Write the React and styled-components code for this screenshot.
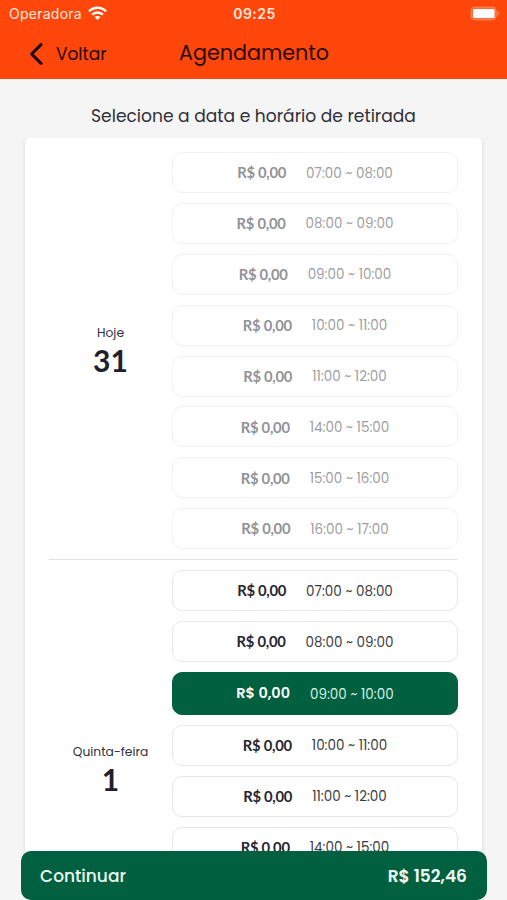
import React, { useState } from "react";
import styled, { createGlobalStyle } from "styled-components";

const GlobalStyle = createGlobalStyle`
  * {
    box-sizing: border-box;
  }
  body {
    margin: 0;
    background: #f5f5f5;
    font-family: Poppins, Inter, sans-serif;
    color: #1f202b;
  }
  button {
    font-family: inherit;
    cursor: pointer;
  }
`;

const Screen = styled.div`
  position: relative;
  display: flex;
  flex-direction: column;
  height: 900px;
  padding-bottom: 24px;
  overflow: hidden;
`;

const Header = styled.header`
  flex: none;
  height: 79px;
  background: #ff460b;
`;

const StatusBar = styled.div`
  display: grid;
  grid-template-columns: 1fr auto 1fr;
  align-items: center;
  height: 27px;
  padding: 0 7px 0 9px;
  color: #ffe9df;
  font-family: Inter, sans-serif;
`;

const Carrier = styled.div`
  display: flex;
  align-items: center;
  gap: 6px;
  font-size: 14px;
  letter-spacing: 0.25px;
`;

const Clock = styled.div`
  font-size: 14px;
  font-weight: 600;
  letter-spacing: 0.45px;
`;

const BatteryIcon = styled.svg`
  justify-self: end;
`;

const NavBar = styled.div`
  display: grid;
  grid-template-columns: 179px 1fr;
  align-items: center;
  height: 52px;
  color: #250a05;
`;

const BackButton = styled.button`
  display: flex;
  align-items: center;
  gap: 13px;
  padding: 1px 0 0 29px;
  border: none;
  background: none;
  color: inherit;
  font-size: 17px;
`;

const Title = styled.h1`
  margin: 0 0 2px;
  font-size: 20.7px;
  font-weight: 400;
`;

const Subtitle = styled.h2`
  flex: none;
  margin: 0;
  padding-top: 25px;
  height: 59px;
  line-height: 25px;
  text-align: center;
  font-size: 17.1px;
  font-weight: 400;
  color: #30313a;
`;

const Content = styled.div`
  flex: 1;
  min-height: 0;
  overflow: hidden;
`;

const Card = styled.main`
  margin: 0 25px;
  padding: 14px 24px 0;
  border-radius: 5px;
  background: #fff;
  box-shadow: 0 1px 4px rgba(0, 0, 0, 0.13);
`;

const Day = styled.section`
  display: grid;
  grid-template-columns: 123px 286px;
  padding-bottom: 10px;

  & + & {
    border-top: 1px solid #e2e2e2;
    padding-top: 10px;
  }
`;

const DayLabel = styled.div`
  display: flex;
  flex-direction: column;
  align-items: center;
  justify-content: center;
`;

const WeekDay = styled.span`
  font-size: 12.3px;
  line-height: 18px;
  color: #30313a;
`;

const DayNumber = styled.strong`
  font-family: Lato, sans-serif;
  font-size: 30px;
  line-height: 36px;
`;

const Slots = styled.div`
  display: flex;
  flex-direction: column;
  gap: 9.9px;
`;

const Price = styled.span`
  font-family: ${(props) => (props.$selected ? "Poppins, Inter" : "Lato")}, sans-serif;
  font-size: ${(props) => (props.$selected ? 14.4 : 14.8)}px;
  font-weight: ${(props) => (props.$selected ? 600 : 700)};
  letter-spacing: ${(props) => (props.$selected ? 0 : -0.28)}px;
  white-space: nowrap;
`;

const Time = styled.span`
  padding-top: 2px;
  font-size: 13.5px;
  white-space: nowrap;
`;

const Slot = styled.button`
  display: flex;
  flex: none;
  align-items: center;
  justify-content: center;
  gap: 20px;
  height: ${(props) => (props.$selected ? 43 : 41)}px;
  padding: 0;
  border: 1px solid ${(props) => (props.$selected ? "#00603f" : "#e6e6e8")};
  border-radius: 10px;
  background: ${(props) => (props.$selected ? "#00603f" : "#fff")};
  color: ${(props) => (props.$selected ? "#fff" : "#25262e")};
  opacity: ${(props) => (props.disabled ? 0.5 : 1)};

  ${Price} {
    padding-bottom: ${(props) => (props.$selected ? 0 : 0.6)}px;
  }

  ${Time} {
    color: ${(props) => (props.$selected ? "#d5f0e3" : "#3a3b42")};
  }
`;

const Footer = styled.button`
  position: absolute;
  left: 21px;
  right: 20px;
  bottom: 0;
  display: flex;
  align-items: center;
  justify-content: space-between;
  height: 49px;
  padding: 0 20px 0 19px;
  border: none;
  border-radius: 10px;
  background: #00603f;
  color: #eefaf4;
  font-size: 17px;
  font-weight: 500;
`;

const Total = styled.span`
  font-size: 17px;
  font-weight: 600;
`;

const HOURS = [
  "07:00 ~ 08:00",
  "08:00 ~ 09:00",
  "09:00 ~ 10:00",
  "10:00 ~ 11:00",
  "11:00 ~ 12:00",
  "14:00 ~ 15:00",
  "15:00 ~ 16:00",
  "16:00 ~ 17:00",
];

// the second day continues below the footer
const DAYS = [
  { weekDay: "Hoje", number: 31, disabled: true },
  { weekDay: "Quinta-feira", number: 1, disabled: false },
];

export default function App() {
  const [selected, setSelected] = useState("1-09:00 ~ 10:00");

  return (
    <Screen>
      <GlobalStyle />
      <Header>
        <StatusBar>
          <Carrier>
            Operadora
            <svg width="19" height="15" viewBox="0 0 19 15" fill="none" stroke="#fff" strokeWidth="2.5">
              <path d="M1 5.3C5.7.6 13.3.6 18 5.3" />
              <path d="M4.1 8.6c3.1-2.9 7.7-2.9 10.8 0" />
              <path d="M6.5 11.1c1.7-1.6 4.3-1.6 6 0l-3 3z" fill="#fff" stroke="none" />
            </svg>
          </Carrier>
          <Clock>09:25</Clock>
          <BatteryIcon width="30" height="15" viewBox="0 0 30 15">
            <rect x="1.2" y="1.2" width="25" height="12.6" rx="3.5" fill="#ff6c3c" stroke="#ff8b62" strokeWidth="1" />
            <rect x="3" y="3" width="21.5" height="9" rx="1.5" fill="#fff" />
            <path d="M27.6 5.2c2 .8 2 3.8 0 4.6z" fill="#ff8b62" />
          </BatteryIcon>
        </StatusBar>
        <NavBar>
          <BackButton type="button">
            <svg width="14" height="22" viewBox="0 0 14 22" fill="none" stroke="#1a0502" strokeWidth="3">
              <path d="M12 1.6 2.6 11l9.4 9.4" strokeLinecap="round" strokeLinejoin="round" />
            </svg>
            Voltar
          </BackButton>
          <Title>Agendamento</Title>
        </NavBar>
      </Header>
      <Subtitle>Selecione a data e horário de retirada</Subtitle>
      <Content>
        <Card>
          {DAYS.map((day) => (
            <Day key={day.number}>
              <DayLabel>
                <WeekDay>{day.weekDay}</WeekDay>
                <DayNumber>{day.number}</DayNumber>
              </DayLabel>
              <Slots>
                {HOURS.map((time) => {
                  const id = `${day.number}-${time}`;
                  const isSelected = selected === id;
                  return (
                    <Slot
                      key={id}
                      type="button"
                      disabled={day.disabled}
                      $selected={isSelected}
                      onClick={() => setSelected(id)}
                    >
                      <Price $selected={isSelected}>R$ 0,00</Price>
                      <Time>{time}</Time>
                    </Slot>
                  );
                })}
              </Slots>
            </Day>
          ))}
        </Card>
      </Content>
      <Footer type="button">
        Continuar
        <Total>R$ 152,46</Total>
      </Footer>
    </Screen>
  );
}
